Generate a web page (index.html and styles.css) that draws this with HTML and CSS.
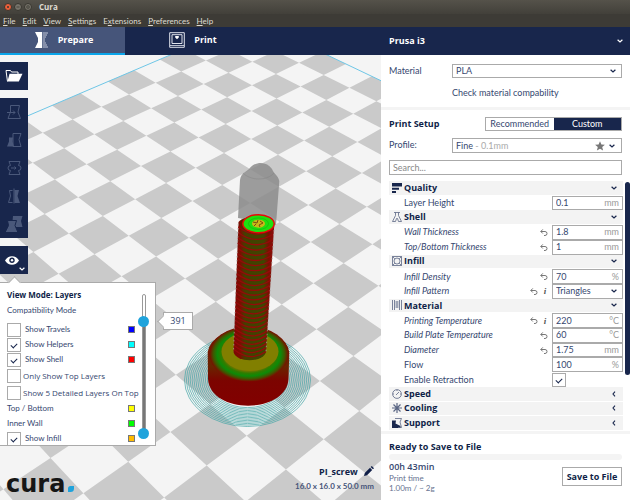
FILE: index.html
```html
<!DOCTYPE html>
<html lang="en">
<head>
<meta charset="utf-8">
<title>Cura</title>
<link rel="stylesheet" href="styles.css">
</head>
<body>
<svg class="defs" aria-hidden="true">
  <symbol id="chev" viewBox="0 0 6 4"><path d="M.6.7 3 3 5.4.7" fill="none" stroke="currentColor" stroke-width="1.2"/></symbol>
  <symbol id="chev-left" viewBox="0 0 4 6"><path d="M3 .6 1 3l2 2.400" fill="none" stroke="currentColor" stroke-width="1.1"/></symbol>
  <symbol id="reset" viewBox="0 0 8 7"><path d="M.8 2.500h4.200a2 2 0 0 1 0 4H4M2.800.4.800 2.500l2 2" fill="none" stroke="currentColor" stroke-width="1"/></symbol>
</svg>

<header class="titlebar">
  <i class="dot close"><svg viewBox="0 0 8 8"><path d="M2.500 2.500l3 3m0-3l-3 3"/></svg></i>
  <i class="dot"><svg viewBox="0 0 8 8"><path d="M2 4h4"/></svg></i>
  <i class="dot"><svg viewBox="0 0 8 8"><path d="M2.500 2.500h3v3h-3z"/></svg></i>
  <span>Cura</span>
</header>
<nav class="menubar">
  <a href="#"><u>F</u>ile</a><a href="#"><u>E</u>dit</a><a href="#"><u>V</u>iew</a><a href="#"><u>S</u>ettings</a><a href="#">E<u>x</u>tensions</a><a href="#"><u>P</u>references</a><a href="#"><u>H</u>elp</a>
</nav>

<div class="topbar">
  <button class="tab active">
    <svg width="14" height="16" viewBox="0 0 14 16"><path d="M0 0h7v16H0l3-6V6z" fill="#fff"/><path d="M7.500 1H13M7.500 3H12M7.500 5h3.500M7.500 7h2.500M7.500 9h2.500M7.500 11h3.500M7.500 13H12M7.500 15H13" stroke="#c3c9d8" stroke-width="1"/></svg>
    Prepare
  </button>
  <button class="tab">
    <svg width="16" height="16" viewBox="0 0 16 16" fill="none" stroke="#dfe3ec"><path d="M.7.700h14.600v14.600H.7zM3 2.700h10v8.800H3z"/><path d="M1 13.500h14" stroke-width=".8"/><path d="M6.200 4h3.600v1.500L8 7.300 6.200 5.500z" fill="#fff" stroke="none"/></svg>
    Print
  </button>
  <button class="machine">Prusa i3 <svg class="chev"><use href="#chev"/></svg></button>
</div>

<div class="main">
  <main class="view">
    <svg class="scene" id="scene" aria-hidden="true">
      <defs>
        <linearGradient id="body" x1="0" y1="0" x2="0" y2="1"><stop offset="0" stop-color="#7c1000"/><stop offset=".5" stop-color="#6a2400"/><stop offset=".68" stop-color="#7c0400"/><stop offset="1" stop-color="#820000"/></linearGradient>
        <radialGradient id="cap"><stop offset=".62" stop-color="#6f7600"/><stop offset=".7" stop-color="#2f7d00"/><stop offset=".8" stop-color="#0d8a08"/><stop offset=".9" stop-color="#3c5a00"/><stop offset="1" stop-color="#7c0c00"/></radialGradient>
        <linearGradient id="shaft"><stop offset="0" stop-color="#7d0505"/><stop offset=".17" stop-color="#7a1000"/><stop offset=".28" stop-color="#443f00"/><stop offset=".74" stop-color="#3f4600"/><stop offset=".86" stop-color="#7a1000"/><stop offset="1" stop-color="#8d1010"/></linearGradient>
      </defs>
      <path id="cells" fill="#cacaca"/>
      <path id="edges" fill="none" stroke="#6ec6e6"/>
      <g id="skirt" fill="none" stroke="#43a5a5" stroke-width=".7"/>
      <path d="M207.700 352a41 27 0 0 1 81.600 0L288.500 379c-2 35-78 36-80.500 0z" fill="url(#body)"/>
      <ellipse cx="249" cy="354" rx="39.500" ry="27.500" fill="url(#cap)"/>
      <ellipse cx="250" cy="351.500" rx="28.500" ry="19.500" fill="#817f00"/>
      <path d="M238 218l2-38c1-7 6-8 9-11 6-8 18-8 23 0 2 5 6 6 7.300 12L276 225z" fill="#8c8c8c" fill-opacity=".85"/>
      <path d="M243 173c8 8 24 8 31 0" fill="none" stroke="#7f7f7f" stroke-opacity=".4"/>
      <path d="M238.500 222c6-7 30-8 35.800 2L266 352c-3 11-30 11-32.500 0z" fill="url(#shaft)"/>
      <g id="threads" fill="none" stroke="#960a0a" stroke-width="1.300"/>
      <path d="M238.300 224L233.500 352M274.300 226L266 352" fill="none" stroke="#a69a96" stroke-width=".8" stroke-dasharray="1.500 2.500"/>
      <ellipse cx="258.500" cy="223.700" rx="15.700" ry="9" fill="#1ee010" stroke="#e80808" stroke-width="1.400"/>
      <ellipse cx="258.500" cy="223.700" rx="10" ry="5.800" fill="none" stroke="#12b60c" stroke-width=".6"/>
      <ellipse cx="258.500" cy="223.700" rx="6.500" ry="4" fill="#c9b818"/>
      <path d="M253 222l4 1 1-3m2 1l3 2-4 2 1 2m-4-3l-2 2" fill="none" stroke="#7a4a10" stroke-width="1"/>
    </svg>

    <div class="tools">
      <button class="tool" aria-label="Open file"><svg width="18" height="14" viewBox="0 0 18 14"><path d="M2.500 12.500L1 1.500h4.500L6.500 3H13v2" fill="none" stroke="#fff"/><path d="M4.500 4.800H17.500L13.800 12.500H2.500z" fill="#fff"/></svg></button>
      <div class="group">
        <button class="tool" aria-label="Move"><svg class="mesh"><path d="M4.500 1.500h9l-1.500 6.500 2.500 6.500h-12.500l2.500-6.500zM1 8.500h8M7 6.500l2 2-2 2" fill="none"/></svg></button>
        <button class="tool" aria-label="Scale"><svg class="mesh"><path d="M7 1.500h8l-2 6 2 7H7z" fill="none"/><path d="M3 5.500h4l-.5 4 1.500 5H1l2-5z" class="solid"/></svg></button>
        <button class="tool" aria-label="Rotate"><svg class="mesh"><path d="M3 1.500h11l-1.500 4a2.500 2.500 0 0 1 0 5L14 14.500H3l1.500-4a2.500 2.500 0 0 1 0-5zM5 8h5M8.500 6.500l1.500 1.500-1.500 1.500" fill="none"/></svg></button>
        <button class="tool" aria-label="Mirror"><svg class="mesh"><path d="M6.500 2.500H3.500l1 5.500-2 6.500h4M8 .5v15" fill="none"/><path d="M8.500 2H13l-1.500 6 2.500 7H8.500z" class="solid"/></svg></button>
        <button class="tool" aria-label="Per model settings"><svg class="mesh"><path d="M7 0h9.500l-1.500 5 1.500 6H6z" class="solid"/><path d="M1.500 4.500H10.500L9 9.500l3 7H-1l3.500-7z" class="solid front"/></svg></button>
      </div>
      <button class="tool eye" aria-label="View mode"><svg width="14" height="9" viewBox="0 0 14 9"><path d="M0 4.500C3-1.200 11-1.200 14 4.500 11 10.200 3 10.200 0 4.500z" fill="#fff"/><circle cx="7" cy="4.300" r="2.700" fill="#18264c"/><circle cx="7" cy="4.300" r="1.200" fill="#fff"/></svg><svg class="chev more"><use href="#chev"/></svg></button>
    </div>

    <section class="layers">
      <div class="options">
        <h2>View Mode: Layers</h2>
        <p>Compatibility Mode</p>
        <label class="opt"><input type="checkbox">Show Travels<i class="swatch blue"></i></label>
        <label class="opt"><input type="checkbox" checked>Show Helpers<i class="swatch cyan"></i></label>
        <label class="opt"><input type="checkbox" checked>Show Shell<i class="swatch red"></i></label>
        <label class="opt wide"><input type="checkbox">Only Show Top Layers</label>
        <label class="opt wide"><input type="checkbox">Show 5 Detailed Layers On Top</label>
        <div class="opt">Top / Bottom<i class="swatch yellow"></i></div>
        <div class="opt">Inner Wall<i class="swatch green"></i></div>
        <label class="opt"><input type="checkbox" checked>Show Infill<i class="swatch orange"></i></label>
      </div>
      <div class="slider">
        <i class="track"></i>
        <input type="range" min="0" max="485" value="391" aria-label="Upper layer">
        <input type="range" min="0" max="485" value="0" aria-label="Lower layer">
      </div>
    </section>
    <output class="tip">391</output>
    <div class="logo">cura<svg width="6" height="6" viewBox="0 0 6 6"><path d="M2.500 0H6v2.500Q6 6 2.500 6H0V2.500Q0 0 2.500 0z" fill="#1fa3dc"/></svg></div>
    <div class="model">
      <div class="name">PI_screw <svg width="10" height="10" viewBox="0 0 10 10"><path d="M0 10l.8-3L6 1.800 8.200 4 3 9.200zM6.700 1.100L7.800 0 10 2.200 8.900 3.300z" fill="#101f48"/></svg></div>
      <div class="size">16.0 x 16.0 x 50.0 mm</div>
    </div>
  </main>

  <aside class="side">
    <div class="pane material">
      <label for="mat">Material</label>
      <div class="pick"><select id="mat"><option>PLA</option></select><svg class="chev"><use href="#chev"/></svg></div>
      <a class="check" href="#">Check material compability</a>
    </div>
    <div class="pane setup">
      <div class="modes"><h2>Print Setup</h2><div class="switch"><button>Recommended</button><button class="on">Custom</button></div></div>
      <div class="profile">
        <label for="profile">Profile:</label>
        <button id="profile" class="box">Fine<span class="dim"> - 0.1mm</span><svg class="star" viewBox="0 0 10 10"><path d="M5 .3l1.400 3.200 3.500.3-2.700 2.300.9 3.500L5 7.800 1.900 9.600l.9-3.500L.1 3.800l3.500-.3z" fill="#777"/></svg><svg class="chev"><use href="#chev"/></svg></button>
      </div>
      <input class="box search" type="search" placeholder="Search..." aria-label="Search settings">
    </div>
    <div class="scroller">
      <div class="settings">
        <button class="head"><svg class="ic"><path d="M0 0h10v3.500H0zM0 4.700h7v2H0zM0 8h4v2H0z" class="fill"/></svg>Quality<svg class="chev"><use href="#chev"/></svg></button>
        <div class="row"><label for="s1">Layer Height</label><span class="box"><input id="s1" value="0.1"><i>mm</i></span></div>
        <button class="head"><svg class="ic"><path d="M2 .5h6M3.500.500v3L.5 9.500h3l1-3h1l1 3h3l-3-6v-3"/></svg>Shell<svg class="chev"><use href="#chev"/></svg></button>
        <div class="row mod"><label for="s2">Wall Thickness</label><svg class="reset"><use href="#reset"/></svg><span class="box"><input id="s2" value="1.8"><i>mm</i></span></div>
        <div class="row mod"><label for="s3">Top/Bottom Thickness</label><svg class="reset"><use href="#reset"/></svg><span class="box"><input id="s3" value="1"><i>mm</i></span></div>
        <button class="head"><svg class="ic"><path d="M.5.500h9v9h-9zM5 2l2.200.9.9 2.100-.9 2.200L5 8.100l-2.200-.9L2 5l.8-2.100zM.5.500l2.300 2.400M9.500.500L7.200 2.900M.5 9.500l2.300-2.300M9.500 9.500L7.200 7.200"/></svg>Infill<svg class="chev"><use href="#chev"/></svg></button>
        <div class="row mod"><label for="s4">Infill Density</label><svg class="reset"><use href="#reset"/></svg><span class="box"><input id="s4" value="70"><i>%</i></span></div>
        <div class="row mod"><label for="s5">Infill Pattern</label><svg class="reset"><use href="#reset"/></svg><b class="info">i</b><span class="pick"><select id="s5"><option>Triangles</option></select><svg class="chev"><use href="#chev"/></svg></span></div>
        <button class="head"><svg class="ic"><path d="M.5 0v10M2.500 0v10M7.500 0v10M9.500 0v10M4.200 1v7M5.800 1v7" /></svg>Material<svg class="chev"><use href="#chev"/></svg></button>
        <div class="row mod"><label for="s6">Printing Temperature</label><svg class="reset"><use href="#reset"/></svg><b class="info">i</b><span class="box"><input id="s6" value="220"><i>°C</i></span></div>
        <div class="row mod"><label for="s7">Build Plate Temperature</label><svg class="reset"><use href="#reset"/></svg><span class="box"><input id="s7" value="60"><i>°C</i></span></div>
        <div class="row mod"><label for="s8">Diameter</label><svg class="reset"><use href="#reset"/></svg><span class="box"><input id="s8" value="1.75"><i>mm</i></span></div>
        <div class="row"><label for="s9">Flow</label><span class="box"><input id="s9" value="100"><i>%</i></span></div>
        <div class="row"><label for="s10">Enable Retraction</label><span class="cell"><input id="s10" type="checkbox" checked></span></div>
        <button class="head"><svg class="ic"><circle cx="5" cy="5" r="4.400"/><path d="M4 6l3-3M5 1v1M1 5h1M8 5h1"/></svg>Speed<svg class="chev left"><use href="#chev-left"/></svg></button>
        <button class="head"><svg class="ic bold"><path d="M5 0v10M0 5h10M1.500 1.500l7 7M8.500 1.500l-7 7"/></svg>Cooling<svg class="chev left"><use href="#chev-left"/></svg></button>
        <button class="head"><svg class="ic"><path d="M0 2.500h4l-.5 3 5 2.500v2H0z" class="fill"/><path d="M3 .5h6.500L8 4l1.500 5.500H6"/></svg>Support<svg class="chev left"><use href="#chev-left"/></svg></button>
      </div>
      <i class="thumb"></i>
    </div>
    <footer class="save">
      <h2>Ready to Save to File</h2>
      <div class="progress"></div>
      <div class="job">
        <div><strong>00h 43min</strong><small>Print time</small><small>1.00m / ~ 2g</small></div>
        <button>Save to File</button>
      </div>
    </footer>
  </aside>
</div>
<script src="scene.js"></script>
</body>
</html>
```
FILE: styles.css
```css
* { box-sizing: border-box; }
body {
  --navy: #18264c;
  --ink: #35476f;
  --line: #aaa;
  --strong: "Open Sans", "Noto Sans", sans-serif;
  margin: 0;
  height: 100vh;
  display: flex;
  flex-direction: column;
  overflow: hidden;
  font: 9px/14px Lato, "Open Sans", sans-serif;
  color: var(--ink);
  background: #fff;
}
button, input, select { font: inherit; color: inherit; margin: 0; padding: 0; border: 0; background: none; border-radius: 0; }
h2, p { margin: 0; font-size: 9px; }
h2 { color: #101f48; font-weight: 700; }
h2, .titlebar, .topbar button, .head, .model, .job strong, .job button, .opt.wide, .tip { font-family: var(--strong); }
a { color: inherit; text-decoration: none; }
i { font-style: normal; }
.defs { position: absolute; width: 0; height: 0; }
.chev { width: 6px; height: 4px; flex: none; color: var(--navy); }
.chev.left { width: 4px; height: 6px; margin-right: 1px; }

.titlebar { display: flex; align-items: center; height: 14px; padding-left: 4px; gap: 2px; background: linear-gradient(#55524a, #42403a); color: #dfdbd2; font-weight: 700; font-size: 8px; }
.titlebar span { margin-left: 5px; }
.dot { width: 8px; height: 8px; border-radius: 4px; background: #77746b; border: 1px solid #38362f; display: flex; }
.dot svg { width: 6px; height: 6px; fill: none; stroke: #38362f; }
.dot.close { background: #f0603a; }
.menubar { display: flex; align-items: center; gap: 7px; height: 13px; padding-left: 3px; background: #3d3b36; color: #dfdbd2; font-size: 8px; }
.menubar u { text-underline-offset: 1px; }

.topbar { display: flex; height: 28px; background: var(--navy); color: #fff; flex: none; }
.topbar button { display: flex; align-items: center; font-weight: 700; color: #fff; }
.tab { width: 125px; padding-left: 3px; justify-content: center; gap: 9px; border-bottom: 2px solid transparent; }
.tab.active { background: #46557a; border-color: #0aa5ea; }
.tab + .tab { margin-left: 4px; }
.topbar .machine { width: 249px; margin-left: auto; padding: 0 7px 0 8px; justify-content: space-between; }
.machine .chev { color: #fff; }

.main { flex: 1; display: flex; min-height: 0; }
.view { flex: 1; min-width: 0; position: relative; overflow: hidden; background: #f4f4f4; }
.scene { position: absolute; inset: 0; width: 100%; height: 100%; }

.tools { position: relative; display: flex; flex-direction: column; gap: 8px; width: 28px; padding-top: 7px; }
.tool { display: flex; align-items: center; justify-content: center; width: 28px; height: 28px; background: var(--navy); }
.group { background: var(--navy); }
.mesh { width: 16px; height: 16px; fill: none; stroke: #4a587a; stroke-width: 1; overflow: visible; }
.mesh .solid { fill: #4a587a; stroke: none; }
.mesh .front { stroke: var(--navy); }
.eye { position: relative; padding-right: 4px; }
.more { position: absolute; right: 3px; bottom: 3px; color: #fff; }

.layers { position: absolute; left: -1px; top: 227px; width: 157px; height: 164px; display: flex; background: #fff; border: 1px solid var(--line); }
.layers::before { content: ""; position: absolute; left: 10px; top: -5px; width: 8px; height: 8px; background: #fff; border: solid var(--line); border-width: 1px 0 0 1px; transform: rotate(45deg); }
.options { width: 143px; flex: none; padding: 4px 8px 0 7px; overflow: hidden; font-size: 8px; line-height: 15px; white-space: nowrap; }
.options h2, .options p { font-size: 8px; height: 16px; }
.options p { height: 19px; }
.opt { display: flex; align-items: center; height: 15px; gap: 4px; }
.opt.wide { height: 17px; gap: 2px; }
.swatch { width: 7px; height: 7px; margin-left: auto; border: 1px solid #777; }
.blue { background: #00f; } .cyan { background: #0ff; } .red { background: #f00; }
.yellow { background: #ff0; } .green { background: #0f0; } .orange { background: #fb0; }
input[type=checkbox] { appearance: none; width: 14px; height: 14px; flex: none; border: 1px solid var(--line); background: #fff; display: grid; place-items: center; }
input[type=checkbox]:checked::after { content: ""; width: 5px; height: 3px; border: solid var(--navy); border-width: 0 0 1px 1px; transform: rotate(-45deg); }

.slider { position: relative; width: 11px; margin: 6px 6px 6px -5px; }
.track { position: absolute; left: 4px; top: 5px; bottom: 5px; width: 4px; border: 1px solid #999; border-radius: 2px; background: linear-gradient(#fff 19%, #777 19%); }
.slider input { position: absolute; inset: 0; width: 11px; height: 100%; appearance: none; writing-mode: vertical-lr; direction: rtl; pointer-events: none; }
.slider input::-webkit-slider-thumb { appearance: none; width: 11px; height: 11px; border-radius: 6px; background: #1fa3dc; pointer-events: auto; }
.tip { position: absolute; left: 163px; top: 257px; width: 30px; height: 18px; border: 1px solid var(--line); background: #fff; text-align: center; line-height: 16px; }
.tip::before { content: ""; position: absolute; left: -5px; top: 4px; width: 8px; height: 8px; background: #fff; border: solid var(--line); border-width: 0 0 1px 1px; transform: rotate(45deg); }
.logo { position: absolute; left: 6px; bottom: 6px; display: flex; align-items: baseline; gap: 3px; font: 700 24px/20px "DejaVu Sans", sans-serif; color: #161616; }
.model { position: absolute; right: 7px; bottom: 6px; text-align: right; color: #101f48; font-weight: 700; line-height: 15px; }
.name svg { margin-left: 4px; vertical-align: -1px; }
.size { font: 700 8px/15px Lato, sans-serif; color: #46557a; }

.side { width: 249px; flex: none; display: flex; flex-direction: column; background: #fff; }
.pane { padding: 0 8px; }
.material { display: grid; grid-template-columns: 63px 1fr; row-gap: 8px; padding-top: 9px; padding-bottom: 7px; border-bottom: 3px solid #f4f4f4; }
.check { grid-column: 2; }
.pick { position: relative; display: block; height: 14px; }
.pick select { appearance: none; display: block; width: 100%; height: 100%; padding: 0 3px; border: 1px solid var(--line); background: #fff; line-height: 12px; }
.pick .chev { position: absolute; right: 6px; top: 5px; pointer-events: none; }
.box { display: flex; align-items: center; height: 15px; border: 1px solid var(--line); background: #fff; padding: 0 3px; }
.setup { display: flex; flex-direction: column; gap: 7px; padding-top: 7px; padding-bottom: 6px; }
.modes { display: flex; justify-content: space-between; align-items: center; height: 14px; }
.switch { display: flex; width: 137px; border: 1px solid var(--line); }
.switch button { flex: 1; height: 12px; line-height: 12px; }
.switch .on { background: var(--navy); color: #fff; }
.profile { display: grid; grid-template-columns: 63px 1fr; }
.profile .box { padding-right: 6px; text-align: left; }
.dim { color: #aaa; white-space: pre; }
.star { width: 10px; height: 10px; margin: 0 4px 0 auto; }
.search { width: 100%; appearance: none; }
.search::placeholder { color: #888; opacity: 1; }

.scroller { flex: 1; min-height: 0; display: flex; gap: 2px; padding-left: 8px; }
.settings { flex: 1; display: grid; grid-auto-rows: minmax(0, 1fr); }
.head { display: flex; align-items: center; width: 100%; padding: 0 6px 0 3px; background: #f3f3f3; border-bottom: 1px solid #fff; color: #101f48; font-weight: 700; text-align: left; }
.head .chev { margin-left: auto; }
.head .chev.left { margin-right: 1px; }
.ic { width: 10px; height: 10px; margin-right: 2px; fill: none; stroke: #5a6684; stroke-width: .8; }
.ic .fill { fill: var(--navy); stroke: none; }
.ic.bold { stroke-width: 1.2; }
.row { display: flex; align-items: center; padding-left: 15px; gap: 4px; }
.row label { margin-right: auto; }
.mod label { font-style: italic; }
.row .box, .row .pick, .cell { width: 71px; height: 100%; }
.cell { display: flex; align-items: center; }
.row input:not([type]) { width: 0; flex: 1; }
.row .box i { color: #999; }
.reset { width: 8px; height: 7px; color: #777; }
.info { width: 6px; text-align: center; font: italic 700 9px/12px "Liberation Serif", serif; color: #555; }
.thumb { width: 5px; height: 77%; margin-top: 1px; border-radius: 3px; background: var(--navy); }

.save { border-top: 3px solid #f4f4f4; padding: 6px 8px 7px; }
.progress { height: 6px; border-radius: 3px; background: #f4f4f4; }
.job { display: flex; justify-content: space-between; align-items: center; }
.job strong, .job small { display: block; font-size: 8px; line-height: 10px; }
.job strong { font-size: 9px; line-height: 13px; font-weight: 600; }
.job small { color: #66728f; }
.job button { width: 60px; height: 19px; border: 1px solid var(--line); color: #101f48; font-weight: 700; }
```
FILE: scene.js
```js
// Build plate seen in perspective: plate cell (u, v) to view position.
const TOP = 55;
function project(u, v) {
  const w = 1 - 0.03467 * u - 0.03006 * v;
  const x = (29.312 * u - 46.21 * v + 246.7) / w;
  const y = (17.5 * u + 15.905 * v + 435.7) / w - TOP;
  return x.toFixed(2) + " " + y.toFixed(2);
}

let cells = "";
for (let u = -12; u < 8; u++) {
  for (let v = -12; v < 8; v++) {
    if ((u + v) % 2 === 0) continue;
    cells += `M${project(u, v)}L${project(u + 1, v)}L${project(u + 1, v + 1)}L${project(u, v + 1)}z`;
  }
}
document.getElementById("cells").setAttribute("d", cells);
document.getElementById("edges").setAttribute("d", `M${project(-12, 8)}L${project(-12, -12)}L${project(8, -12)}`);

const scene = document.getElementById("scene");
for (const node of scene.children) {
  if (node.id !== "cells" && node.id !== "edges" && node.tagName !== "defs") {
    node.setAttribute("transform", `translate(0 ${-TOP})`);
  }
}

let rings = "";
for (let i = 0; i < 14; i++) {
  rings += `<ellipse cx="247.500" cy="380" rx="${63 - i * 1.9}" ry="${46.5 - i * 1.45}"/>`;
}
document.getElementById("skirt").innerHTML = rings;

// Thread turns get closer together towards the head of the screw.
let threads = "";
let y = 231, step = 5.4;
while (y < 354) {
  const t = (y - 224) / 130;
  const left = 238.5 - 4.5 * t, right = 273.5 - 7.5 * t;
  threads += `<path d="M${left} ${y - 4}Q${(left + right) / 2} ${y + 9} ${right} ${y - 2}"/>`;
  y += step;
  step -= 0.055;
}
document.getElementById("threads").innerHTML = threads;
```
